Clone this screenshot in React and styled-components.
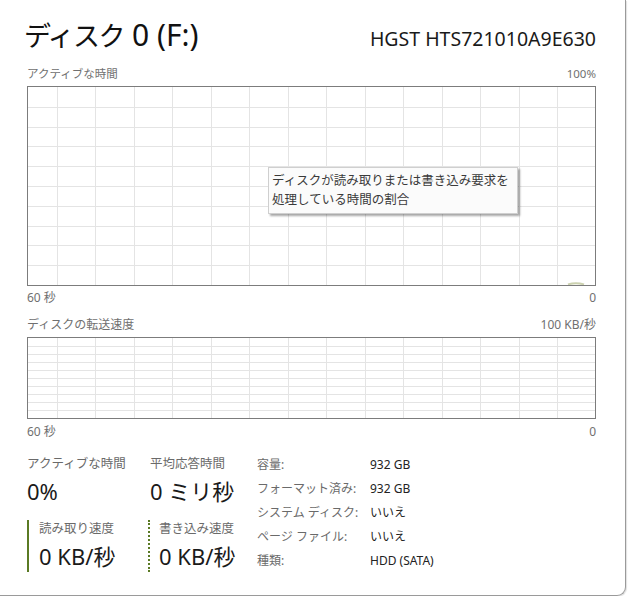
import React from "react";
import styled, { createGlobalStyle } from "styled-components";

const Global = createGlobalStyle`
  html, body { margin: 0; padding: 0; background: #ffffff; }
  body {
    font-family: "Noto Sans", "Noto Sans CJK JP", sans-serif;
    color: #1a1a1a;
  }
`;

const Frame = styled.div`
  width: 626px;
  height: 596px;
  box-sizing: border-box;
  border-right: 1px solid #9a9a9a;
  border-bottom: 1px solid #9a9a9a;
  border-bottom-right-radius: 9px;
  box-shadow: 1px 1px 1px rgba(0, 0, 0, 0.12);
  background: #fff;
`;

const Content = styled.div`
  width: 569px;
  margin-left: 27px;
  padding-top: 14px;
`;

const Header = styled.div`
  display: flex;
  justify-content: space-between;
  align-items: baseline;
  height: 50px;
`;

const Title = styled.div`
  font-size: 30px;
  line-height: 42px;
  margin-left: -3px;
  color: #111;
`;

const TitleKana = styled.span`
  font-size: 27px;
  letter-spacing: -1.5px;
`;

const Model = styled.div`
  font-size: 19.5px;
  color: #1a1a1a;
`;

const AxisRow = styled.div`
  display: flex;
  justify-content: space-between;
  font-size: ${(p) => p.$size || 11.5}px;
  line-height: ${(p) => p.$lh || 16}px;
  height: ${(p) => p.$h || 16}px;
  color: #707070;
`;

const ChartBox = styled.div`
  position: relative;
  height: ${(p) => p.$h}px;
  border: 1px solid #7c7c7c;
  box-sizing: border-box;
  background: #fff;
`;

const GridSvg = styled.svg`
  display: block;
  width: 100%;
  height: 100%;
`;

const Tooltip = styled.div`
  position: absolute;
  left: 240px;
  top: 80px;
  width: 250px;
  box-sizing: border-box;
  padding: 3px 4px 4px 3px;
  background: #fbfbfb;
  border: 1px solid #cfcfcf;
  box-shadow: 2px 2px 2px rgba(0, 0, 0, 0.35);
  font-size: 12.5px;
  line-height: 19px;
  color: #3a3a3a;
  white-space: nowrap;
`;

const Stats = styled.div`
  display: flex;
  margin-top: 10px;
`;

const LeftStats = styled.div`
  display: grid;
  grid-template-columns: 121px 109px;
  grid-template-rows: 65px auto;
`;

const Stat = styled.div`
  display: flex;
  flex-direction: column;
  padding-left: ${(p) => p.$pad || 0}px;
  border-left: ${(p) =>
    p.$line === "solid"
      ? "2px solid #5a7a24"
      : p.$line === "dotted"
      ? "2px dotted #5a7a24"
      : "none"};
  align-self: start;
`;

const StatLabel = styled.div`
  font-size: 12.5px;
  line-height: 18px;
  color: #6a6a6a;
`;

const StatValue = styled.div`
  margin-top: 2px;
  font-size: 22px;
  line-height: 32px;
  color: #1a1a1a;
`;

const Details = styled.div`
  display: grid;
  grid-template-columns: 113px auto;
  grid-auto-rows: 24px;
  align-items: center;
  margin-top: -3px;
  font-size: 12px;
`;

const DetailLabel = styled.div`
  color: #6a6a6a;
`;

const DetailValue = styled.div`
  color: #222;
`;

function Grid({ w, h, rowStep, colStart = 29, colStep = 38.46, trace }) {
  const vs = [];
  for (let x = colStart; x < w; x += colStep) vs.push(x);
  const hs = [];
  for (let y = rowStep; y < h - 1; y += rowStep) hs.push(y);
  return (
    <GridSvg viewBox={`0 0 ${w} ${h}`} preserveAspectRatio="none">
      {hs.map((y, i) => (
        <line key={"h" + i} x1="0" x2={w} y1={Math.round(y) + 0.5} y2={Math.round(y) + 0.5} stroke="#e4e4e4" strokeWidth="1" />
      ))}
      {vs.map((x, i) => (
        <line key={"v" + i} x1={Math.round(x) + 0.5} x2={Math.round(x) + 0.5} y1="0" y2={h} stroke="#e4e4e4" strokeWidth="1" />
      ))}
      {trace && (
        <path d={`M${w - 27} ${h - 0.5} Q${w - 19} ${h - 3} ${w - 11} ${h - 0.5}`} fill="none" stroke="#a9b27a" strokeWidth="2" opacity="0.6" />
      )}
    </GridSvg>
  );
}

export default function App() {
  return (
    <>
      <Global />
      <Frame>
        <Content>
          <Header>
            <Title>
              <TitleKana>ディスク</TitleKana> 0 (F:)
            </Title>
            <Model>HGST HTS721010A9E630</Model>
          </Header>
          <AxisRow $h={22} $lh={20}>
            <span>アクティブな時間</span>
            <span>100%</span>
          </AxisRow>
          <ChartBox $h={200}>
            <Grid w={567} h={198} rowStep={19.8} trace />
            <Tooltip>
              ディスクが読み取りまたは書き込み要求を
              <br />
              処理している時間の割合
            </Tooltip>
          </ChartBox>
          <AxisRow $size={12} $h={26} $lh={24}>
            <span>60 秒</span>
            <span>0</span>
          </AxisRow>
          <AxisRow $size={12} $h={25} $lh={26}>
            <span>ディスクの転送速度</span>
            <span>100 KB/秒</span>
          </AxisRow>
          <ChartBox $h={82}>
            <Grid w={567} h={80} rowStep={8} />
          </ChartBox>
          <AxisRow $size={12} $h={26} $lh={26}>
            <span>60 秒</span>
            <span>0</span>
          </AxisRow>
          <Stats>
            <LeftStats>
              <Stat>
                <StatLabel>アクティブな時間</StatLabel>
                <StatValue>0%</StatValue>
              </Stat>
              <Stat $pad={2}>
                <StatLabel>平均応答時間</StatLabel>
                <StatValue>0 ミリ秒</StatValue>
              </Stat>
              <Stat $line="solid" $pad={10}>
                <StatLabel>読み取り速度</StatLabel>
                <StatValue>0 KB/秒</StatValue>
              </Stat>
              <Stat $line="dotted" $pad={9}>
                <StatLabel>書き込み速度</StatLabel>
                <StatValue>0 KB/秒</StatValue>
              </Stat>
            </LeftStats>
            <Details>
              <DetailLabel>容量:</DetailLabel>
              <DetailValue>932 GB</DetailValue>
              <DetailLabel>フォーマット済み:</DetailLabel>
              <DetailValue>932 GB</DetailValue>
              <DetailLabel>システム ディスク:</DetailLabel>
              <DetailValue>いいえ</DetailValue>
              <DetailLabel>ページ ファイル:</DetailLabel>
              <DetailValue>いいえ</DetailValue>
              <DetailLabel>種類:</DetailLabel>
              <DetailValue>HDD (SATA)</DetailValue>
            </Details>
          </Stats>
        </Content>
      </Frame>
    </>
  );
}
